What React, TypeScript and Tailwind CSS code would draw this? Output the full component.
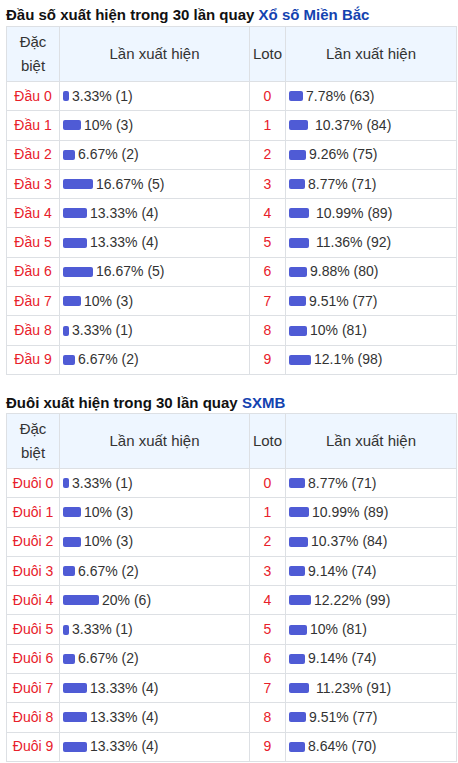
type Row = { label: string; pct: string; count: number; loto: string; lpct: string; lcount: number; gap?: boolean; lgap?: boolean };

const dau: Row[] = [
  { label: 'Đầu 0', pct: '3.33', count: 1, loto: '0', lpct: '7.78', lcount: 63 },
  { label: 'Đầu 1', pct: '10', count: 3, loto: '1', lpct: '10.37', lcount: 84, lgap: true },
  { label: 'Đầu 2', pct: '6.67', count: 2, loto: '2', lpct: '9.26', lcount: 75 },
  { label: 'Đầu 3', pct: '16.67', count: 5, loto: '3', lpct: '8.77', lcount: 71 },
  { label: 'Đầu 4', pct: '13.33', count: 4, loto: '4', lpct: '10.99', lcount: 89, lgap: true },
  { label: 'Đầu 5', pct: '13.33', count: 4, loto: '5', lpct: '11.36', lcount: 92, lgap: true },
  { label: 'Đầu 6', pct: '16.67', count: 5, loto: '6', lpct: '9.88', lcount: 80 },
  { label: 'Đầu 7', pct: '10', count: 3, loto: '7', lpct: '9.51', lcount: 77 },
  { label: 'Đầu 8', pct: '3.33', count: 1, loto: '8', lpct: '10', lcount: 81 },
  { label: 'Đầu 9', pct: '6.67', count: 2, loto: '9', lpct: '12.1', lcount: 98 },
];

const duoi: Row[] = [
  { label: 'Đuôi 0', pct: '3.33', count: 1, loto: '0', lpct: '8.77', lcount: 71 },
  { label: 'Đuôi 1', pct: '10', count: 3, loto: '1', lpct: '10.99', lcount: 89 },
  { label: 'Đuôi 2', pct: '10', count: 3, loto: '2', lpct: '10.37', lcount: 84 },
  { label: 'Đuôi 3', pct: '6.67', count: 2, loto: '3', lpct: '9.14', lcount: 74 },
  { label: 'Đuôi 4', pct: '20', count: 6, loto: '4', lpct: '12.22', lcount: 99 },
  { label: 'Đuôi 5', pct: '3.33', count: 1, loto: '5', lpct: '10', lcount: 81 },
  { label: 'Đuôi 6', pct: '6.67', count: 2, loto: '6', lpct: '9.14', lcount: 74 },
  { label: 'Đuôi 7', pct: '13.33', count: 4, loto: '7', lpct: '11.23', lcount: 91, lgap: true },
  { label: 'Đuôi 8', pct: '13.33', count: 4, loto: '8', lpct: '9.51', lcount: 77 },
  { label: 'Đuôi 9', pct: '13.33', count: 4, loto: '9', lpct: '8.64', lcount: 70 },
];

function Bar({ pct, count, gap }: { pct: string; count: number; gap?: boolean }) {
  return (
    <div className="flex items-center">
      <span className="inline-block h-[10px] rounded-[2px] bg-[#4f5bd5]" style={{ width: Math.round(parseFloat(pct) * 1.8) }} />
      <span className={gap ? 'ml-[7px]' : 'ml-[3px]'}>
        {pct}% ({count})
      </span>
    </div>
  );
}

function StatTable({ rows }: { rows: Row[] }) {
  return (
    <table className="ml-[6px] w-[451px] table-fixed border-collapse text-[14px] text-[#333]">
      <colgroup>
        <col className="w-[53px]" />
        <col className="w-[190px]" />
        <col className="w-[36px]" />
        <col />
      </colgroup>
      <thead>
        <tr className="bg-[#eef6ff] text-[15px]">
          <th className="border border-[#dde0e4] py-[3px] font-normal leading-[24px]">
            Đặc
            <br />
            biệt
          </th>
          <th className="border border-[#dde0e4] font-normal">Lần xuất hiện</th>
          <th className="border border-[#dde0e4] font-normal">Loto</th>
          <th className="border border-[#dde0e4] font-normal">Lần xuất hiện</th>
        </tr>
      </thead>
      <tbody>
        {rows.map((r) => (
          <tr key={r.label} className="h-[29.3px]">
            <td className="border border-[#dde0e4] text-center text-[#e8202a]">{r.label}</td>
            <td className="border border-[#dde0e4] pl-[3px]">
              <Bar pct={r.pct} count={r.count} gap={r.gap} />
            </td>
            <td className="border border-[#dde0e4] text-center text-[#e8202a]">{r.loto}</td>
            <td className="border border-[#dde0e4] pl-[3px]">
              <Bar pct={r.lpct} count={r.lcount} gap={r.lgap} />
            </td>
          </tr>
        ))}
      </tbody>
    </table>
  );
}

export default function App() {
  return (
    <div className="w-[458px] bg-white font-['Liberation_Sans',Arial,sans-serif]">
      <h2 className="px-[6px] pt-[5px] pb-[2px] text-[15px] font-bold leading-[19px] text-[#111]">
        Đầu số xuất hiện trong 30 lần quay <span className="text-[#1443b0]">Xổ số Miền Bắc</span>
      </h2>
      <StatTable rows={dau} />
      <h2 className="px-[6px] pt-[18px] pb-[1px] text-[15px] font-bold leading-[19px] text-[#111]">
        Đuôi xuất hiện trong 30 lần quay <span className="text-[#1443b0]">SXMB</span>
      </h2>
      <StatTable rows={duoi} />
    </div>
  );
}
